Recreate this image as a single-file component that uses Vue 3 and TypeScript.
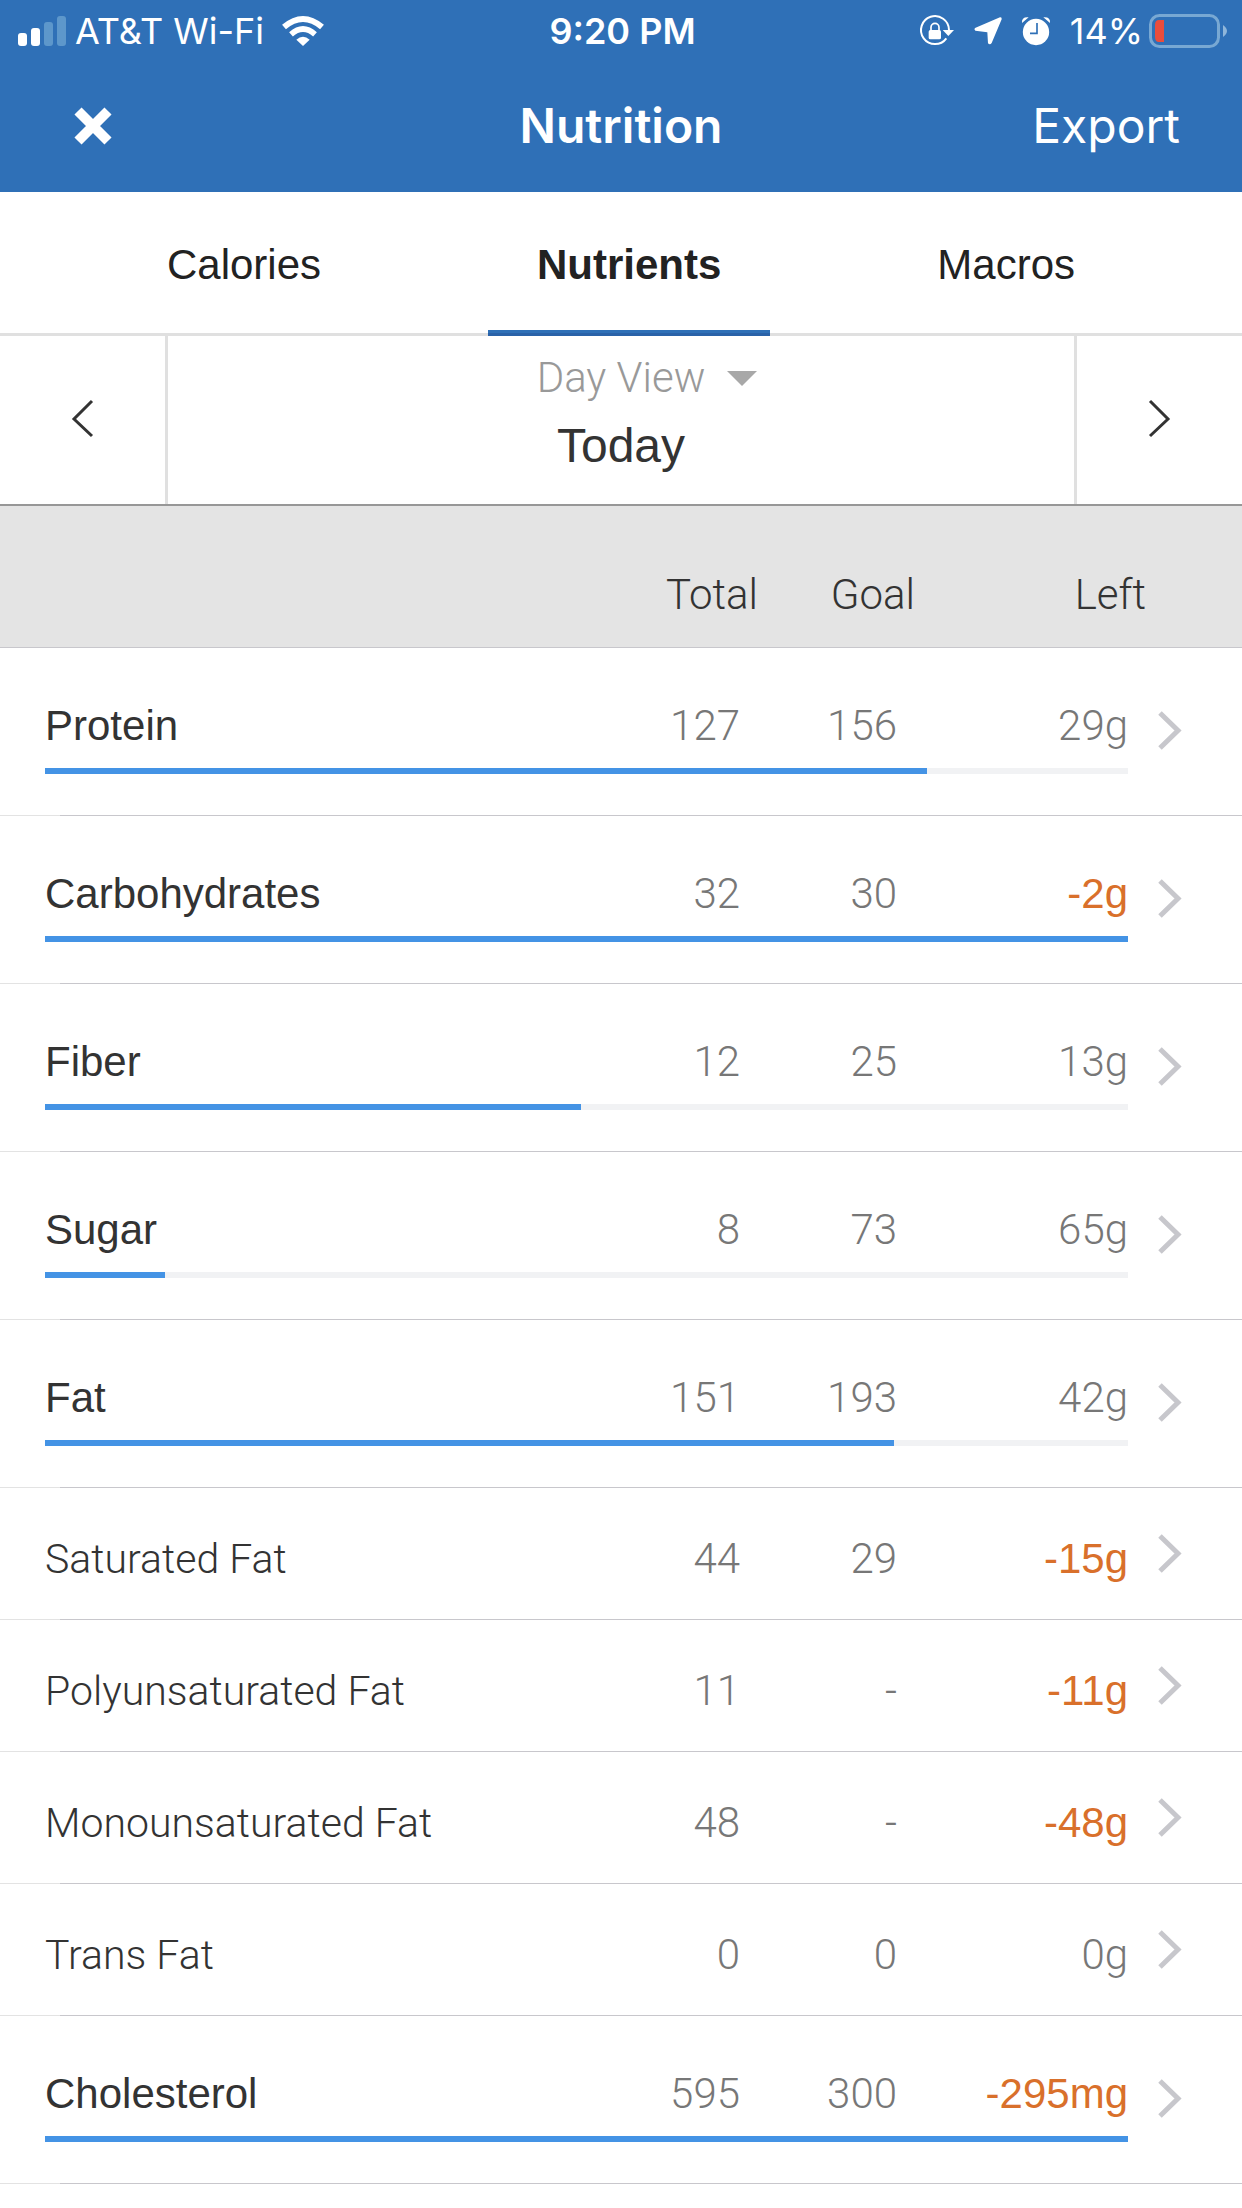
<script setup lang="ts">
import { ref } from 'vue'

interface Nutrient {
  name: string
  total: string
  goal: string
  left: string
  over?: boolean
  progress?: number
}

const tabs = ['Calories', 'Nutrients', 'Macros']
const activeTab = ref('Nutrients')
const view = ref('Day View')

const nutrients: Nutrient[] = [
  { name: 'Protein', total: '127', goal: '156', left: '29g', progress: 81.4 },
  { name: 'Carbohydrates', total: '32', goal: '30', left: '-2g', over: true, progress: 100 },
  { name: 'Fiber', total: '12', goal: '25', left: '13g', progress: 49.5 },
  { name: 'Sugar', total: '8', goal: '73', left: '65g', progress: 11.1 },
  { name: 'Fat', total: '151', goal: '193', left: '42g', progress: 78.4 },
  { name: 'Saturated Fat', total: '44', goal: '29', left: '-15g', over: true },
  { name: 'Polyunsaturated Fat', total: '11', goal: '-', left: '-11g', over: true },
  { name: 'Monounsaturated Fat', total: '48', goal: '-', left: '-48g', over: true },
  { name: 'Trans Fat', total: '0', goal: '0', left: '0g' },
  { name: 'Cholesterol', total: '595', goal: '300', left: '-295mg', over: true, progress: 100 },
]
</script>

<template>
  <div class="screen">
    <header class="top">
      <div class="status">
        <div class="carrier">
          <svg class="signal" width="48" height="30" viewBox="0 0 48 30" aria-hidden="true">
            <rect x="0" y="17" width="9" height="13" rx="3" fill="#fff" />
            <rect x="13" y="12" width="9" height="18" rx="3" fill="#fff" />
            <rect x="26" y="6" width="9" height="24" rx="3" fill="#5d97cb" />
            <rect x="39" y="0" width="9" height="30" rx="3" fill="#5d97cb" />
          </svg>
          <span>AT&amp;T Wi-Fi</span>
          <svg class="wifi" width="42" height="30" viewBox="0 0 126 90" aria-hidden="true">
            <path fill="#fff" d="M63 90 43 71Q63 54 83 71Z" />
            <path fill="none" stroke="#fff" stroke-width="17" d="M27 55Q63 23 99 55" />
            <path fill="none" stroke="#fff" stroke-width="18" d="M6 33Q63-15 120 33" />
          </svg>
        </div>
        <time class="clock">9:20 PM</time>
        <div class="indicators">
          <svg width="34" height="31" viewBox="240 44 102 93" aria-hidden="true">
            <path d="M319 111A42 42 0 1 1 327 86" fill="none" stroke="#fff" stroke-width="6" />
            <path d="M308 86H342L325 104Z" fill="#fff" />
            <rect x="266" y="86" width="37" height="28" rx="5" fill="#fff" />
            <path d="M273 88V78a12 12 0 0 1 24 0V88" fill="none" stroke="#fff" stroke-width="5" />
          </svg>
          <svg width="28" height="28" viewBox="400 50 84 84" aria-hidden="true">
            <path d="M478 51Q484 50 483 57L453 128Q448 135 442 129L440 96 404 91Q399 87 403 83Z" fill="#fff" />
          </svg>
          <svg width="28" height="28" viewBox="546 48 84 84" aria-hidden="true">
            <circle cx="588" cy="93" r="39.500" fill="#fff" />
            <path d="M546 66Q544 47 566 49ZM630 66Q632 47 610 49Z" fill="#fff" />
            <path d="M591 66V97H570" fill="none" stroke="#2f70b7" stroke-width="5" />
          </svg>
          <span class="percent">14%</span>
          <svg class="battery" width="78" height="34" viewBox="0 0 78 34" aria-hidden="true">
            <rect x="1.500" y="1.500" width="68" height="31" rx="9" fill="none" stroke="#78a8d3" stroke-width="3" />
            <path d="M15 6H10Q6 6 6 11V23Q6 28 10 28H15Z" fill="#ea4d3c" />
            <path d="M74 11Q82 17 74 23Z" fill="#8fb6da" />
          </svg>
        </div>
      </div>
      <div class="nav">
        <button class="close" type="button" aria-label="Close">
          <svg width="38" height="38" viewBox="0 0 38 38" aria-hidden="true">
            <path d="M4 4 34 34M34 4 4 34" stroke="#fff" stroke-width="10" />
          </svg>
        </button>
        <h1>Nutrition</h1>
        <button class="export" type="button">Export</button>
      </div>
    </header>

    <div class="tabs" role="tablist">
      <button
        v-for="tab in tabs"
        :key="tab"
        type="button"
        role="tab"
        class="tab"
        :class="{ active: tab === activeTab }"
        :aria-selected="tab === activeTab"
        @click="activeTab = tab"
      >
        {{ tab }}
      </button>
    </div>

    <section class="period">
      <button class="step" type="button" aria-label="Previous day">
        <svg width="22" height="38" viewBox="0 0 22 38" aria-hidden="true">
          <path d="M20 1 2 19 20 36" fill="none" stroke="#333" stroke-width="3" />
        </svg>
      </button>
      <div class="current">
        <div class="mode">
          <select v-model="view" aria-label="View">
            <option>Day View</option>
            <option>Week View</option>
          </select>
          <svg class="caret" width="30" height="15" viewBox="0 0 30 15" aria-hidden="true">
            <path d="M0 0H30L15 15Z" fill="#a8a8a8" />
          </svg>
        </div>
        <div class="date">Today</div>
      </div>
      <button class="step" type="button" aria-label="Next day">
        <svg width="22" height="38" viewBox="0 0 22 38" aria-hidden="true">
          <path d="M1 1 19 19 1 36" fill="none" stroke="#333" stroke-width="3" />
        </svg>
      </button>
    </section>

    <table class="nutrients">
      <thead>
        <tr>
          <td></td>
          <th scope="col">Total</th>
          <th scope="col">Goal</th>
          <th scope="col">Left</th>
        </tr>
      </thead>
      <tbody>
        <tr v-for="item in nutrients" :key="item.name" :class="{ major: item.progress !== undefined }">
          <th scope="row">{{ item.name }}</th>
          <td>{{ item.total }}</td>
          <td>{{ item.goal }}</td>
          <td :class="{ over: item.over }">{{ item.left }}</td>
          <td v-if="item.progress !== undefined" class="meter">
            <div class="fill" :style="{ width: item.progress + '%' }"></div>
          </td>
          <td class="more">
            <a href="#" :aria-label="item.name + ' details'">
              <svg width="24" height="38" viewBox="0 0 24 38" aria-hidden="true">
                <path d="M2 1 20 18.500 2 36" fill="none" stroke="#c7c7cc" stroke-width="5" />
              </svg>
            </a>
          </td>
        </tr>
      </tbody>
    </table>
  </div>
</template>

<style>
body {
  margin: 0;
  background: #fff;
}
</style>

<style scoped>
.screen {
  font-family: 'Liberation Sans', Arial, sans-serif;
  font-size: 42px;
  line-height: 48px;
  color: #333;
}

button {
  margin: 0;
  padding: 0;
  border: 0;
  background: none;
  color: inherit;
  font: inherit;
}

svg {
  display: block;
  flex: none;
  overflow: visible;
}

.top {
  background: #2f70b7;
  color: #fff;
  font-family: Inter, sans-serif;
}

.status {
  display: grid;
  grid-template-columns: 1fr auto 1fr;
  align-items: center;
  height: 58px;
  padding: 2px 15px 0 18px;
  font-size: 36px;
}

.carrier,
.indicators {
  display: flex;
  align-items: center;
}

.carrier {
  gap: 9px;
}

.wifi {
  margin-left: 9px;
}

.clock {
  font-weight: 600;
}

.indicators {
  justify-content: flex-end;
  gap: 20px;
}

.battery {
  margin-left: -14px;
}

.nav {
  display: grid;
  grid-template-columns: 1fr auto 1fr;
  align-items: center;
  height: 132px;
  padding: 0 62px;
  font-size: 48px;
}

.nav h1 {
  margin: 0;
  font-size: inherit;
  font-weight: 600;
}

.close {
  justify-self: start;
  padding: 12px;
}

.export {
  justify-self: end;
}

.tabs {
  display: flex;
  justify-content: space-evenly;
  border-bottom: 3px solid #e0e0e0;
  color: #222;
}

.tab {
  margin-bottom: -3px;
  padding: 49px 49px 0;
}

.tab::after {
  content: '';
  display: block;
  height: 3px;
  margin: 41px -49px 0;
  border-bottom: 3px solid transparent;
}

.tab.active {
  font-weight: 700;
}

.tab.active::after {
  background: #2f70b7;
  border-bottom-color: #2a62a8;
}

.period {
  display: grid;
  grid-template-columns: 165px 1fr 165px;
  border-bottom: 2px solid #979797;
}

.step {
  display: flex;
  align-items: center;
  justify-content: center;
  padding-bottom: 2px;
}

.current {
  padding: 18px 0 30px;
  border: solid #e0e0e0;
  border-width: 0 3px;
  text-align: center;
}

.mode {
  display: grid;
  grid-template-columns: 1fr auto 1fr;
  align-items: center;
  margin-bottom: 16px;
}

.mode select {
  grid-column: 2;
  field-sizing: content;
  appearance: none;
  margin: 0;
  padding: 0;
  border: 0;
  background: none;
  color: #999;
  font-family: Roboto, sans-serif;
  font-size: 42px;
  font-weight: 300;
  line-height: 48px;
}

.caret {
  margin-left: 22px;
}

.date {
  font-size: 48px;
  line-height: 56px;
}

.nutrients,
.nutrients thead,
.nutrients tbody {
  display: block;
}

.nutrients tr {
  display: grid;
  grid-template-columns: 1fr 120px 157px 231px 114px;
  padding-left: 45px;
}

.nutrients th,
.nutrients td {
  padding: 0;
  font-family: Roboto, sans-serif;
  font-weight: 300;
  text-align: right;
}

.nutrients thead tr {
  grid-template-columns: 1fr 120px 157px 231px 96px;
  padding-top: 65px;
  padding-bottom: 28px;
  border-bottom: 1px solid #c8c7cc;
  background: #e4e4e4;
}

.nutrients tbody tr {
  padding-top: 47px;
  padding-bottom: 37px;
  background:
    linear-gradient(#e3e3e3, #e3e3e3) left bottom / 60px 1px no-repeat,
    linear-gradient(#c8c7cc, #c8c7cc) right bottom / calc(100% - 60px) 1px no-repeat;
}

.nutrients tbody .major {
  padding-top: 54px;
  padding-bottom: 42px;
}

.nutrients tbody th {
  font-size: 41px;
  text-align: left;
}

.nutrients tbody td {
  color: #777;
}

.nutrients .major th,
.nutrients tbody .over {
  font-family: 'Liberation Sans', Arial, sans-serif;
  font-size: 42px;
  font-weight: 400;
}

.nutrients tbody .over {
  color: #d9702b;
}

.nutrients .meter {
  grid-column: 1 / 5;
  grid-row: 2;
  height: 6px;
  margin-top: 18px;
  background: #f1f2f4;
}

.fill {
  height: 6px;
  background: #4493e5;
}

.nutrients .more {
  grid-column: 5;
  grid-row: 1;
  padding-left: 30px;
}

.more a {
  display: block;
}

.major .more a {
  padding-top: 10px;
}
</style>
